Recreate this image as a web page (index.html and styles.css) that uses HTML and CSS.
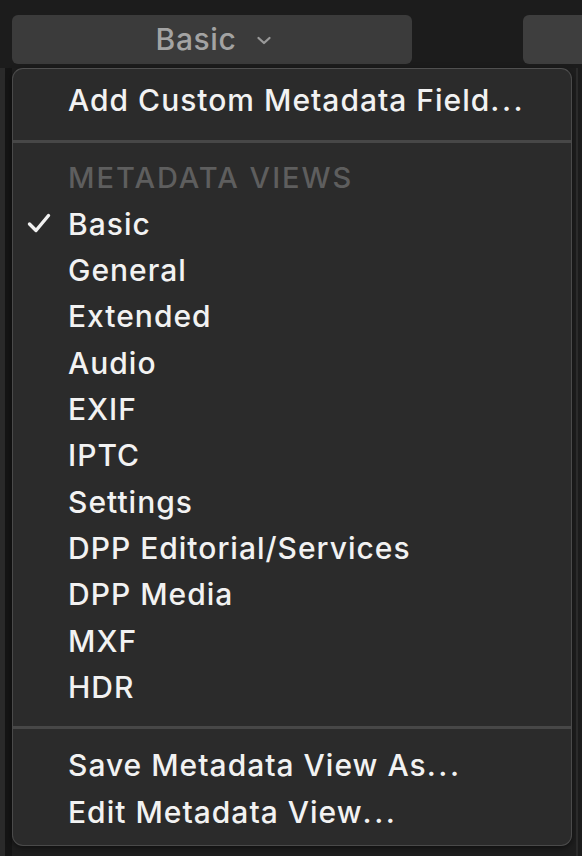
FILE: index.html
```html
<!DOCTYPE html>
<html>
<head>
<meta charset="utf-8">
<link rel="stylesheet" href="styles.css">
</head>
<body>
<div class="screen">
  <div class="toolbar">
    <div class="btn btn-main">
      <span class="btn-label">Basic</span>
      <svg class="chev" width="16" height="9" viewBox="0 0 16 9"><path d="M2.5 2 L8 7 L13.5 2" fill="none" stroke="#9a9a9a" stroke-width="2.3" stroke-linecap="round" stroke-linejoin="round"/></svg>
    </div>
    <div class="btn btn-side"></div>
  </div>
  <div class="content">
    <div class="menu">
      <div class="item">Add Custom Metadata Field<span class="dots">...</span></div>
      <div class="sep sep-top"></div>
      <div class="item header">METADATA VIEWS</div>
      <div class="item checked">
        <svg class="check" width="24" height="20" viewBox="0 0 24 20"><path d="M2.5 11 L9 17.5 L21.5 2.5" fill="none" stroke="#f0f0f0" stroke-width="3.4" stroke-linecap="round" stroke-linejoin="round"/></svg>
        Basic
      </div>
      <div class="item">General</div>
      <div class="item">Extended</div>
      <div class="item">Audio</div>
      <div class="item">EXIF</div>
      <div class="item">IPTC</div>
      <div class="item">Settings</div>
      <div class="item">DPP Editorial/Services</div>
      <div class="item">DPP Media</div>
      <div class="item">MXF</div>
      <div class="item">HDR</div>
      <div class="sep sep-bottom"></div>
      <div class="item">Save Metadata View As<span class="dots">...</span></div>
      <div class="item">Edit Metadata View<span class="dots">...</span></div>
    </div>
    <div class="rail"></div>
  </div>
</div>
</body>
</html>
```

FILE: styles.css
```css
* { box-sizing: border-box; }
html, body {
  margin: 0;
  padding: 0;
  background: #1c1c1c;
  width: 582px;
  height: 856px;
  overflow: hidden;
}
.screen {
  width: 582px;
  height: 856px;
  font-family: Inter, "Noto Sans", "Liberation Sans", sans-serif;
  display: flex;
  flex-direction: column;
  background: linear-gradient(to right, #2a2a2a 0, #2a2a2a 5px, #151515 5px, #151515 12px, #1e1e1e 12px);
}
.toolbar {
  height: 68px;
  display: flex;
  align-items: flex-start;
  padding: 15px 0 0 12px;
  gap: 111px;
  background: #1c1c1c;
}
.btn {
  height: 49px;
  background: #3b3b3b;
  border-radius: 6px;
}
.btn-main {
  width: 400px;
  display: flex;
  align-items: center;
  justify-content: center;
  gap: 20px;
  padding-left: 4px;
  padding-bottom: 2px;
}
.btn-label {
  color: #a3a3a3;
  font-size: 30px;
  font-weight: 500;
  letter-spacing: 0.6px;
}
.chev { margin-top: 3px; }
.btn-side {
  flex: 1;
  border-radius: 6px 0 0 6px;
  background: #3e3e3e;
}
.content {
  flex: 1;
  display: flex;
  padding-left: 12px;
}
.menu {
  width: 560px;
  height: 778px;
  background: #2b2b2b;
  border: 1px solid #4a4a4a;
  border-top-color: #505050;
  border-radius: 11px;
  padding: 8px 0 10px;
  display: flex;
  flex-direction: column;
  box-shadow: 0 2px 6px rgba(0,0,0,0.5);
}
.item {
  height: 46.4px;
  display: flex;
  align-items: center;
  padding-left: 55px;
  color: #f2f2f2;
  font-size: 30px;
  font-weight: 500;
  letter-spacing: 1px;
  position: relative;
  white-space: nowrap;
}
.dots {
  letter-spacing: 2.5px;
}
.header {
  color: #5e5e5e;
  font-size: 29px;
  letter-spacing: 2px;
}
.check {
  position: absolute;
  left: 14px;
  top: 12px;
}
.sep {
  height: 3px;
  background: #474747;
}
.sep-top { margin: 17px 0 11px; }
.sep-bottom { margin: 16px 0 13px; }
.rail {
  flex: 1;
  margin-left: 4px;
  border-left: 2px solid #2b2b2b;
  background: #1c1c1c;
}
```
